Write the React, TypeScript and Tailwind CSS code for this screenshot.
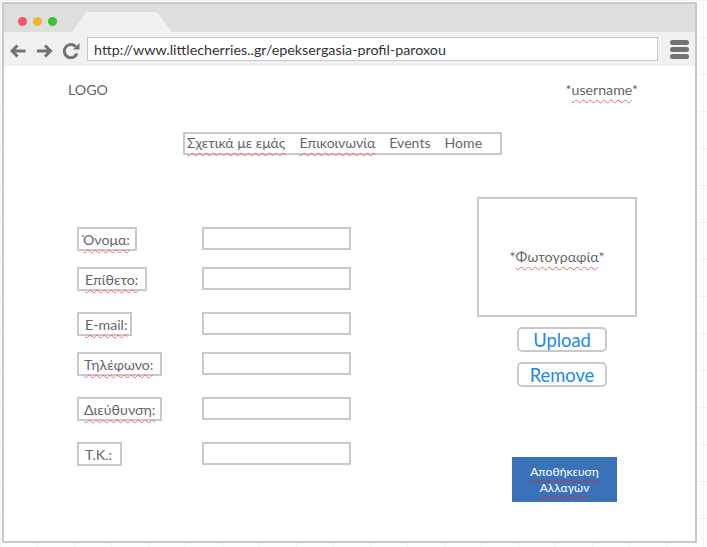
import React from 'react';

const Squiggle = ({ children }: { children: React.ReactNode }) => (
  <span className="underline decoration-wavy decoration-[#e0707a] decoration-1 underline-offset-[4px]">{children}</span>
);

const SaveSquiggle = ({ children }: { children: React.ReactNode }) => (
  <span className="underline decoration-wavy decoration-[#b8324a] decoration-1 underline-offset-[3px]">{children}</span>
);

const fields = [
  { label: <Squiggle>Όνομα:</Squiggle>, width: 'w-[60px]', labelPad: 'pl-[4px]', mt: 'mt-0' },
  { label: <Squiggle>Επίθετο:</Squiggle>, width: 'w-[70px]', labelPad: 'pl-[6px]', mt: 'mt-[17px]' },
  { label: <Squiggle>E-mail:</Squiggle>, width: 'w-[55px]', labelPad: 'pl-[6px]', mt: 'mt-[22px]' },
  { label: <Squiggle>Τηλέφωνο:</Squiggle>, width: 'w-[85px]', labelPad: 'pl-[5px]', mt: 'mt-[17px]' },
  { label: <Squiggle>Διεύθυνση:</Squiggle>, width: 'w-[85px]', labelPad: 'pl-[5px]', mt: 'mt-[22px]' },
  { label: <>Τ.Κ.:</>, width: 'w-[45px]', labelPad: 'pl-[6px]', mt: 'mt-[22px]' },
];

const App = () => {
  return (
    <div className="w-[707px] h-[547px] overflow-hidden bg-white pl-[2px] pt-[2px] font-['Lato','Noto_Sans',sans-serif] text-[#666666] bg-[linear-gradient(#f2f2f2_1px,transparent_1px),linear-gradient(90deg,#f2f2f2_1px,transparent_1px)] bg-[size:37px_37px]">
      <div className="w-[695px] h-[541px] border-2 border-[#c9c9c9] bg-white flex flex-col">
        {/* Browser chrome */}
        <div className="h-[28px] bg-[#dcdfdc] flex items-start shrink-0">
          <div className="flex gap-[6px] pl-[14px] pt-[13px]">
            <span className="w-[9px] h-[9px] rounded-full bg-[#ef5a70]" />
            <span className="w-[9px] h-[9px] rounded-full bg-[#f2b533]" />
            <span className="w-[9px] h-[9px] rounded-full bg-[#3cc13c]" />
          </div>
          <div className="ml-[15px] mt-[8px] w-[100px] h-[20px] bg-[#f1f1f1] [clip-path:polygon(14%_0,85%_0,100%_100%,0_100%)]" />
        </div>
        <div className="h-[34px] bg-[#f1f1f1] flex items-center shrink-0">
          <div className="flex items-center pl-[6px] pt-[4px] gap-[11px] w-[83px]">
            <svg width="16" height="14" viewBox="0 0 16 14" fill="none" stroke="#737373" strokeWidth="3">
              <path d="M15.5 7H3M7.5 1.5 2 7l5.5 5.5" />
            </svg>
            <svg width="16" height="14" viewBox="0 0 16 14" fill="none" stroke="#737373" strokeWidth="3">
              <path d="M0 7h12.5M8 1.5 13.5 7 8 12.5" />
            </svg>
            <svg width="18" height="18" viewBox="0 0 18 18" fill="none" className="-ml-[2px]">
              <path d="M15 11.5A6.6 6.6 0 1 1 13.6 4.5" stroke="#737373" strokeWidth="3" />
              <path d="M11 7.5h6.5V1z" fill="#737373" />
            </svg>
          </div>
          <div className="w-[571px] h-[24px] bg-white border border-[#c9c9c9] pl-[6px] text-[14.3px] leading-[24px] text-[#333]">
            http://www.littlecherries..gr/epeksergasia-profil-paroxou
          </div>
          <div className="ml-[12px] flex flex-col gap-[2px]">
            <span className="w-[19px] h-[5px] rounded-full bg-[#737373]" />
            <span className="w-[19px] h-[5px] rounded-full bg-[#737373]" />
            <span className="w-[19px] h-[5px] rounded-full bg-[#737373]" />
          </div>
        </div>

        {/* Page header */}
        <div className="flex justify-between pl-[64px] pr-[57px] pt-[14px] text-[14.2px] leading-[20px] shrink-0">
          <span>LOGO</span>
          <span>*<Squiggle>username</Squiggle>*</span>
        </div>

        {/* Nav */}
        <div className="ml-[179px] mt-[32px] w-[319px] h-[23px] border-2 border-[#c9c9c9] flex items-center pl-[2px] pb-[2px] text-[14.1px] leading-[18px] shrink-0">
          <Squiggle>Σχετικά με εμάς</Squiggle>
          <span className="ml-[14px]"><Squiggle>Επικοινωνία</Squiggle></span>
          <span className="ml-[14px]">Events</span>
          <span className="ml-[14px]">Home</span>
        </div>

        {/* Form and photo */}
        <div className="flex flex-1">
          <div className="ml-[73px] mt-[72px] w-[274px] flex flex-col">
            {fields.map((field, index) => (
              <div key={index} className={`flex items-center justify-between h-[23px] ${field.mt}`}>
                <div className={`${field.width} h-[24px] border-2 border-[#c9c9c9] text-[14.2px] leading-[22px] whitespace-nowrap ${field.labelPad}`}>
                  {field.label}
                </div>
                <div className="w-[149px] h-[23px] border-2 border-[#c9c9c9]" />
              </div>
            ))}
          </div>
          <div className="ml-[126px] mt-[42px] w-[160px] flex flex-col">
            <div className="h-[120px] border-2 border-[#c9c9c9] flex items-center justify-center text-[14.2px]">
              <span>*<Squiggle>Φωτογραφία</Squiggle>*</span>
            </div>
            <div className="ml-[40px] mt-[10px] w-[90px] h-[25px] rounded-[5px] border-2 border-[#c9c9c9] text-[#1e88e5] text-[18.3px] leading-[22px] text-center">Upload</div>
            <div className="ml-[40px] mt-[10px] w-[90px] h-[25px] rounded-[5px] border-2 border-[#c9c9c9] text-[#1e88e5] text-[18.3px] leading-[22px] text-center">Remove</div>
            <div className="ml-[35px] mt-[70px] w-[105px] h-[45px] bg-[#3a72b8] text-white text-[12px] leading-[16px] flex items-center justify-center text-center">
              <span><SaveSquiggle>Αποθήκευση</SaveSquiggle><br /><SaveSquiggle>Αλλαγών</SaveSquiggle></span>
            </div>
          </div>
        </div>
      </div>
    </div>
  );
};

export default App;
